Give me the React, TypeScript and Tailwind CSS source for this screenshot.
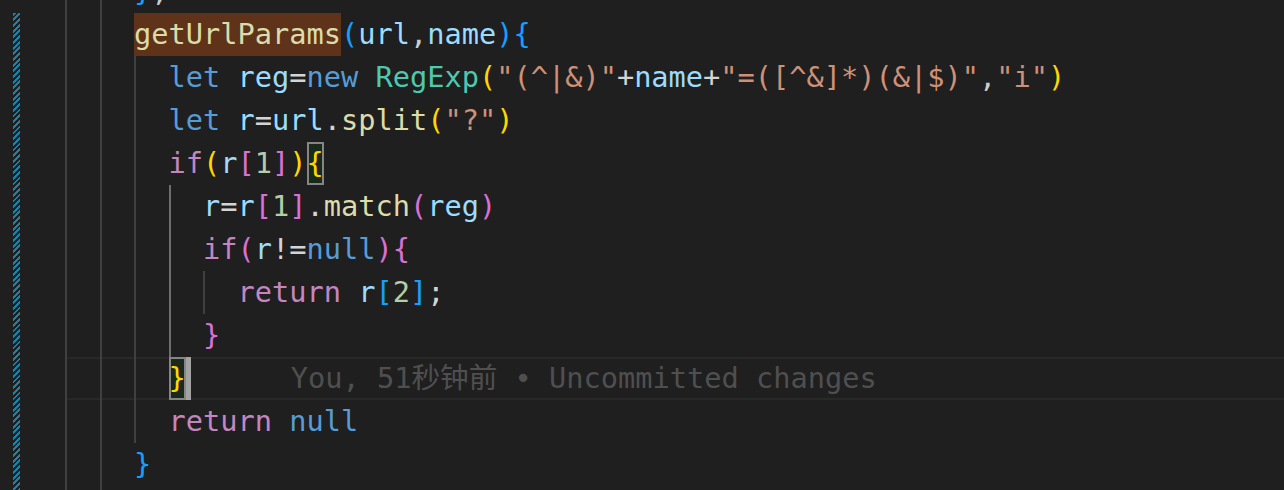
const C: Record<string, string> = {
  kw: "text-[#569cd6]",
  ctl: "text-[#c586c0]",
  fn: "text-[#dcdcaa]",
  v: "text-[#9cdcfe]",
  cls: "text-[#4ec9b0]",
  str: "text-[#ce9178]",
  num: "text-[#b5cea8]",
  op: "text-[#d4d4d4]",
  pn: "text-[#cccccc]",
  b1: "text-[#ffd700]",
  b2: "text-[#da70d6]",
  b3: "text-[#179fff]",
};

type Tok = [string, string];

// 0 = normal guide, 1 = active bracket-pair guide
function Guides({ levels }: { levels: number[] }) {
  return (
    <>
      {levels.map((g, i) =>
        g === 1 ? (
          <span key={i} className="inline-block h-full w-[34.5px] align-top shadow-[inset_2px_0_0_#6e6e6e]"> </span>
        ) : (
          <span key={i} className="inline-block h-full w-[34.5px] align-top shadow-[inset_2px_0_0_#404040]"> </span>
        )
      )}
    </>
  );
}

function Toks({ toks }: { toks: Tok[] }) {
  return (
    <>
      {toks.map(([c, t], i) => (
        <span key={i} className={C[c]}>
          {t}
        </span>
      ))}
    </>
  );
}

function Line({ levels, toks, children }: { levels: number[]; toks?: Tok[]; children?: React.ReactNode }) {
  return (
    <div className="h-[43px] leading-[43px] whitespace-pre">
      <Guides levels={levels} />
      {toks && <Toks toks={toks} />}
      {children}
    </div>
  );
}

function Match({ ch, color }: { ch: string; color: string }) {
  return (
    <span className={`inline-block h-full align-top bg-[#1a2a1a] shadow-[inset_0_0_0_2px_#858585] ${color}`}>{ch}</span>
  );
}

export default function App() {
  return (
    <div className="flex h-[490px] w-[1284px] overflow-hidden bg-[#1f1f1f] font-['DejaVu_Sans_Mono','Noto_Sans_CJK_SC',monospace] text-[28.65px]">
      {/* gutter with modified-lines stripe */}
      <div className="flex w-[65px] shrink-0 flex-col pt-[13px]">
        <div className="ml-[13px] w-[7px] flex-1 bg-[repeating-linear-gradient(-45deg,#1b81a8_0px,#1b81a8_2px,transparent_2px,transparent_4px)]" />
      </div>

      <div className="-mt-[30px] flex-1">
        <Line levels={[0, 0]} toks={[["b3", "}"], ["pn", ","]]} />
        <Line levels={[0, 0]}>
          <span className="inline-block h-full align-top bg-[#5e3319] text-[#dcdcaa]">getUrlParams</span>
          <Toks toks={[["b3", "("], ["v", "url"], ["pn", ","], ["v", "name"], ["b3", ")"], ["b3", "{"]]} />
        </Line>
        <Line
          levels={[0, 0, 0]}
          toks={[
            ["kw", "let "],
            ["v", "reg"],
            ["op", "="],
            ["kw", "new "],
            ["cls", "RegExp"],
            ["b1", "("],
            ["str", '"(^|&)"'],
            ["op", "+"],
            ["v", "name"],
            ["op", "+"],
            ["str", '"=([^&]*)(&|$)"'],
            ["pn", ","],
            ["str", '"i"'],
            ["b1", ")"],
          ]}
        />
        <Line
          levels={[0, 0, 0]}
          toks={[
            ["kw", "let "],
            ["v", "r"],
            ["op", "="],
            ["v", "url"],
            ["op", "."],
            ["fn", "split"],
            ["b1", "("],
            ["str", '"?"'],
            ["b1", ")"],
          ]}
        />
        <Line
          levels={[0, 0, 0]}
          toks={[
            ["ctl", "if"],
            ["b1", "("],
            ["v", "r"],
            ["b2", "["],
            ["num", "1"],
            ["b2", "]"],
            ["b1", ")"],
          ]}
        >
          <Match ch="{" color="text-[#ffd700]" />
        </Line>
        <Line
          levels={[0, 0, 0, 1]}
          toks={[
            ["v", "r"],
            ["op", "="],
            ["v", "r"],
            ["b2", "["],
            ["num", "1"],
            ["b2", "]"],
            ["op", "."],
            ["fn", "match"],
            ["b2", "("],
            ["v", "reg"],
            ["b2", ")"],
          ]}
        />
        <Line
          levels={[0, 0, 0, 1]}
          toks={[
            ["ctl", "if"],
            ["b2", "("],
            ["v", "r"],
            ["op", "!="],
            ["kw", "null"],
            ["b2", ")"],
            ["b2", "{"],
          ]}
        />
        <Line
          levels={[0, 0, 0, 1, 0]}
          toks={[
            ["ctl", "return "],
            ["v", "r"],
            ["b3", "["],
            ["num", "2"],
            ["b3", "]"],
            ["op", ";"],
          ]}
        />
        <Line levels={[0, 0, 0, 1]} toks={[["b2", "}"]]} />

        {/* current line */}
        <div className="h-[43px] whitespace-pre leading-[43px] shadow-[inset_0_2px_0_#282828,inset_0_-2px_0_#282828]">
          <Guides levels={[0, 0, 0]} />
          <Match ch="}" color="text-[#ffd700]" />
          <span className="inline-block h-full w-[5px] align-top bg-[#a3a3a3]" />
          <span className="ml-[100px] text-[#4f4f4f]">You, 51秒钟前 • Uncommitted changes</span>
        </div>

        <Line levels={[0, 0, 0]} toks={[["ctl", "return "], ["kw", "null"]]} />
        <Line levels={[0, 0]} toks={[["b3", "}"]]} />
        <Line levels={[0, 0]} />
      </div>
    </div>
  );
}
